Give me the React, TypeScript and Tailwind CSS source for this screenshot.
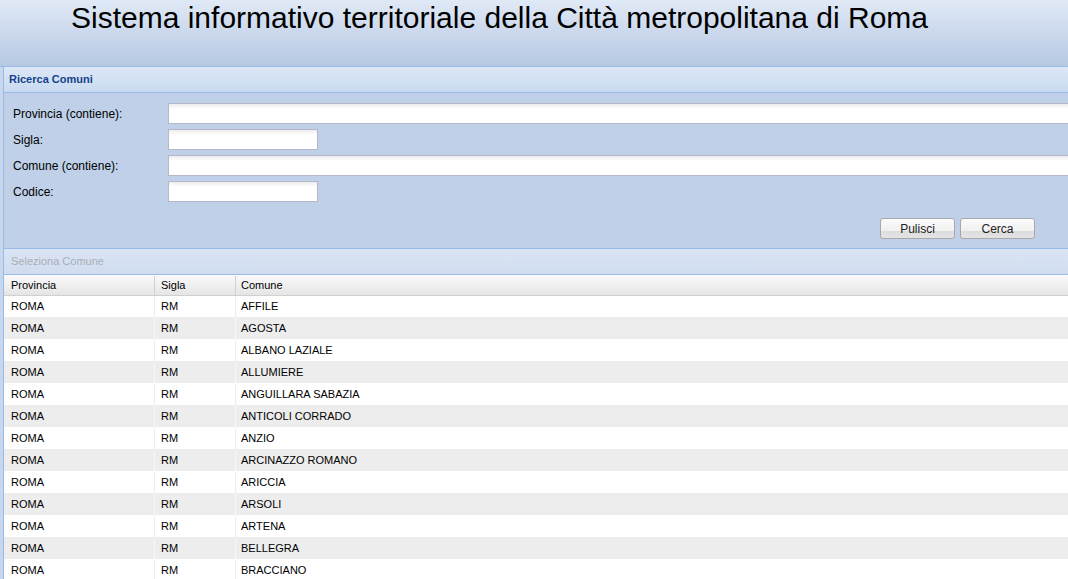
import React from 'react'

const comuni = [
  'AFFILE',
  'AGOSTA',
  'ALBANO LAZIALE',
  'ALLUMIERE',
  'ANGUILLARA SABAZIA',
  'ANTICOLI CORRADO',
  'ANZIO',
  'ARCINAZZO ROMANO',
  'ARICCIA',
  'ARSOLI',
  'ARTENA',
  'BELLEGRA',
  'BRACCIANO',
  'CAMERATA NUOVA',
  'CAMPAGNANO DI ROMA',
]

const fields = [
  { label: 'Provincia (contiene):', wide: true },
  { label: 'Sigla:', wide: false },
  { label: 'Comune (contiene):', wide: true },
  { label: 'Codice:', wide: false },
]

function Field({ label, wide }: { label: string; wide: boolean }) {
  return (
    <div className="flex items-center h-[21px]">
      <label className="w-[155px] shrink-0 text-[12px] text-black leading-none">{label}</label>
      <input
        type="text"
        className={`${wide ? 'w-[920px]' : 'w-[150px]'} shrink-0 h-[21px] border border-[#b5b8c8] bg-[linear-gradient(#ececec,#ffffff_5px)] outline-none`}
      />
    </div>
  )
}

function Button({ children }: { children: React.ReactNode }) {
  return (
    <button className="w-[75px] h-[21px] rounded-[3px] border border-[#a8a8a8] bg-[linear-gradient(#fbfbfb,#f1f1f1_62%,#dcdcdc_62%,#e4e4e4)] text-[12px] text-[#222] leading-none">
      {children}
    </button>
  )
}

export default function App() {
  return (
    <div className="w-[1068px] h-[579px] overflow-hidden bg-[#c8d7ec] font-['Liberation_Sans',Arial,sans-serif]">
      <div className="h-[67px] border-b border-[#99bbe8] bg-gradient-to-b from-[#e0e9f6] to-[#b6c8e2] pl-[71px]">
        <h1 className="text-[30px] leading-[36px] text-black">Sistema informativo territoriale della Città metropolitana di Roma</h1>
      </div>

      <div className="pl-[3px]">
        <div className="border-l border-[#99bbe8]">
          {/* Ricerca */}
          <div className="h-[26px] border-b border-[#99bbe8] bg-gradient-to-b from-[#dde8f6] to-[#c9daf0] pl-[5px] flex items-center">
            <span className="text-[11px] font-bold text-[#15428b]">Ricerca Comuni</span>
          </div>
          <div className="bg-[#bfd0e8] pt-[10px] pb-[9px]">
            <div className="flex flex-col gap-[5px] pl-[9px]">
              {fields.map((f) => (
                <Field key={f.label} label={f.label} wide={f.wide} />
              ))}
            </div>
            <div className="flex justify-end gap-[5px] pr-[33px] mt-[16px]">
              <Button>Pulisci</Button>
              <Button>Cerca</Button>
            </div>
          </div>

          {/* Seleziona */}
          <div className="h-[27px] border-y border-[#99bbe8] bg-gradient-to-b from-[#dae5f4] to-[#d0ddef] pl-[7px] flex items-center">
            <span className="text-[11px] text-[#a9adb5]">Seleziona Comune</span>
          </div>
          <div className="bg-white pt-[1px]">
            <div className="flex h-[20px] border-b border-[#d0d0d0] bg-gradient-to-b from-[#f9f9f9] to-[#e5e5e5] text-[11px] text-black items-center">
              <div className="w-[151px] h-full flex items-center pl-[7px] border-r border-[#d0d0d0]">Provincia</div>
              <div className="w-[81px] h-full flex items-center pl-[6px] border-r border-[#d0d0d0]">Sigla</div>
              <div className="flex-1 h-full flex items-center pl-[5px]">Comune</div>
            </div>
            {comuni.map((c, i) => {
              const odd = i % 2 === 1
              return (
                <div
                  key={c}
                  className={`flex h-[22px] text-[11px] text-black items-center border-b ${odd ? 'bg-[#ededed] border-white' : 'bg-white border-[#ededed]'}`}
                >
                  <div className={`w-[151px] h-full flex items-center pl-[7px] border-r ${odd ? 'border-[#f7f7f7]' : 'border-[#ededed]'}`}>ROMA</div>
                  <div className={`w-[81px] h-full flex items-center pl-[6px] border-r ${odd ? 'border-[#f7f7f7]' : 'border-[#ededed]'}`}>RM</div>
                  <div className="flex-1 h-full flex items-center pl-[5px]">{c}</div>
                </div>
              )
            })}
          </div>
        </div>
      </div>
    </div>
  )
}
